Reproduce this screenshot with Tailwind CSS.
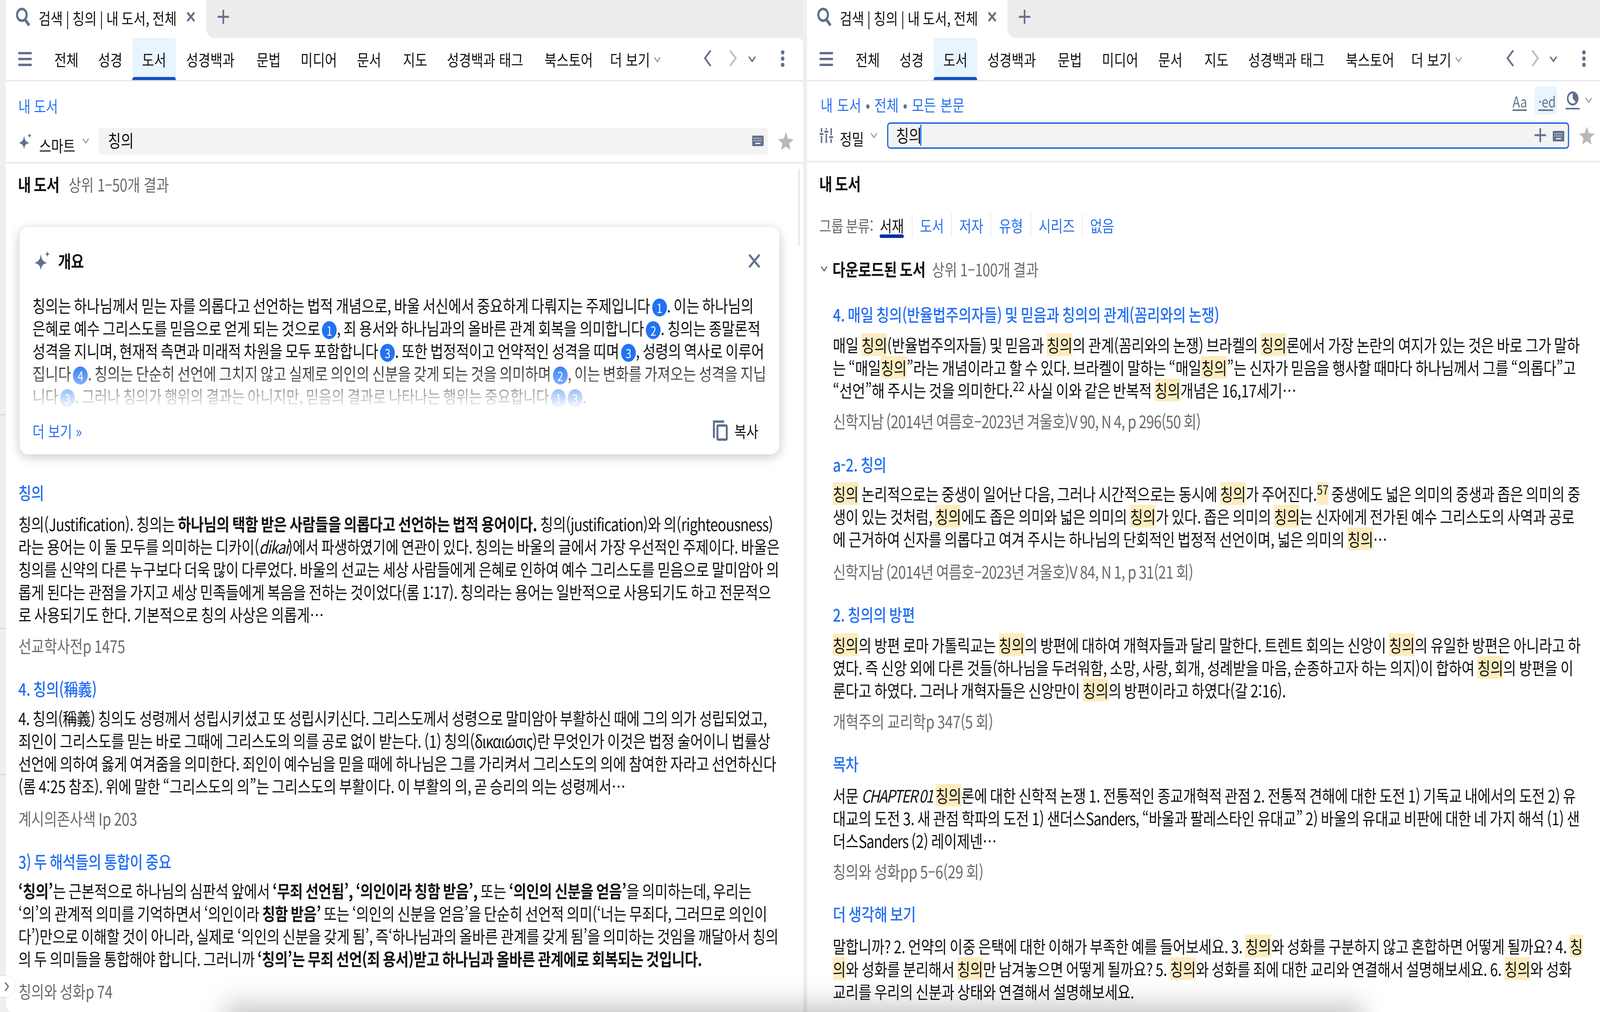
<!DOCTYPE html>
<html lang="ko">
  <head>
    <meta charset="UTF-8" />
    <meta name="viewport" content="width=device-width, initial-scale=1.0" />
    <script src="https://cdn.jsdelivr.net/npm/@tailwindcss/browser@4"></script>
    <title>검색 | 칭의</title>
  </head>
  <body class="w-screen h-screen overflow-hidden bg-[#efefef]">
  <div class="relative w-[4980px] h-[2590px] origin-top-left scale-x-[0.82249] overflow-hidden bg-[#efefef] text-[#111] font-['Noto_Sans_CJK_KR',sans-serif] text-[44px] leading-[58px] tracking-[-0.4px] [word-spacing:-3px] [&_mark]:bg-[#feecbf] [&_mark]:inline-block [&_mark]:text-inherit">
    <div class="flex h-full">
      <!-- left pane -->
      <div class="ml-[18px] w-[2482px] h-full relative overflow-hidden bg-white rounded-bl-[20px]">
        <div class="flex h-[97px] bg-white">
          <div class="w-[624px] flex items-center bg-white rounded-t-[20px] relative">
            <svg class="absolute left-[30px] top-[19px] w-[48px] h-[48px]" viewBox="0 0 48 48" fill="none" stroke="#62708c" stroke-width="6.500"><circle cx="20" cy="19" r="15"/><path d="M30 31l13 15" stroke-width="8"/></svg>
            <span class="absolute left-[102px] top-[16px] text-[41px] tracking-normal [word-spacing:-2px] whitespace-nowrap">검색 | 칭의 | 내 도서, 전체</span>
            <svg class="absolute left-[562px] top-[29px] w-[28px] h-[28px]" viewBox="0 0 28 28" fill="none" stroke="#62708c" stroke-width="5.500"><path d="M3 3l22 22M25 3L3 25"/></svg>
          </div>
          <div class="flex-1 bg-[#ececec] rounded-bl-[24px] relative">
            <svg class="absolute left-[35px] top-[25px] w-[36px] h-[36px]" viewBox="0 0 36 36" fill="none" stroke="#62708c" stroke-width="5"><path d="M18 0v36M0 18h36"/></svg>
          </div>
        </div>
        <div class="bg-[#ececec]">
          <div class="h-[111px] flex items-stretch bg-white rounded-tr-[16px] border-b-[3px] border-[#e6e6e6] text-[41px] tracking-normal [word-spacing:0] relative">
            <svg class="ml-[39px] mt-[36px] w-[42px] h-[36px]" viewBox="0 0 42 36" fill="#62708c"><rect width="42" height="6" rx="1"/><rect y="15" width="42" height="6" rx="1"/><rect y="30" width="42" height="6" rx="1"/></svg>
            <div class="ml-[40px] flex items-center">
              <span class="px-[30px]">전체</span>
              <span class="px-[31px]">성경</span>
              <span class="px-[30px] h-full flex items-center bg-[#e8f4fe] rounded-t-[8px] relative">도서<i class="absolute left-0 right-0 bottom-0 h-[8px] bg-[#1550c0] rounded-t-[6px]"></i></span>
              <span class="pl-[32px] pr-[37px]">성경백과</span>
              <span class="px-[31px]">문법</span>
              <span class="px-[31px]">미디어</span>
              <span class="pl-[31px] pr-[37px]">문서</span>
              <span class="pl-[31px] pr-[28px]">지도</span>
              <span class="px-[33px]">성경백과 태그</span>
              <span class="pl-[33px] pr-[30px]">북스토어</span>
              <span class="pl-[23px]">더 보기</span>
              <svg class="ml-[12px] mt-[4px] w-[22px] h-[14px]" viewBox="0 0 22 14" fill="none" stroke="#97a1b5" stroke-width="3.5"><path d="M2 1l9 11 9-11"/></svg>
            </div>
            <svg class="absolute left-[2172px] top-[31px] w-[26px] h-[42px]" viewBox="0 0 26 42" fill="none" stroke="#62708c" stroke-width="5"><path d="M22 1L4 21l18 20"/></svg>
            <svg class="absolute left-[2250px] top-[31px] w-[26px] h-[42px]" viewBox="0 0 26 42" fill="none" stroke="#b9bfcc" stroke-width="5"><path d="M4 1l18 20L4 41"/></svg>
            <svg class="absolute left-[2311px] top-[47px] w-[24px] h-[15px]" viewBox="0 0 24 15" fill="none" stroke="#62708c" stroke-width="4"><path d="M2 1l10 12L22 1"/></svg>
            <svg class="absolute left-[2410px] top-[31px] w-[16px] h-[44px]" viewBox="0 0 16 44" fill="#62708c"><circle cx="8" cy="6" r="5.5"/><circle cx="8" cy="22" r="5.5"/><circle cx="8" cy="38" r="5.5"/></svg>
          </div>
        </div>
        <div class="h-[210px] border-b-[3px] border-[#e6e6e6] pt-[33px]">
          <div class="pl-[39px] text-[41px] [word-spacing:0] text-[#2672f0]">내 도서</div>
          <div class="mt-[27px] flex items-center">
            <svg class="ml-[40px] w-[42px] h-[42px]" viewBox="0 0 42 42" fill="#62708c"><path d="M17 7c2 11 4 16 17 19-13 2-15 6-17 16-2-10-5-14-17-16 12-3 15-8 17-19z"/><path d="M34 0c.5 4 2 6 6 7-4 1-5.500 3-6 7-.5-4-2-6-6-7 4-1 5.500-3 6-7z"/></svg>
            <span class="ml-[22px] mt-[20px] text-[41px] leading-[50px]">스마트</span>
            <svg class="ml-[22px] w-[22px] h-[14px]" viewBox="0 0 22 14" fill="none" stroke="#97a1b5" stroke-width="3.5"><path d="M2 1l9 11 9-11"/></svg>
            <div class="ml-[29px] w-[2084px] h-[68px] rounded-[8px] bg-[#f3f3f3] relative pl-[29px] leading-[62px]">칭의
              <svg class="absolute left-[2034px] top-[20px] w-[36px] h-[27px]" viewBox="0 0 36 27"><rect width="36" height="27" rx="3" fill="#62708c"/><path d="M5 7h26M5 13h26" stroke="#fff" stroke-width="2.500" stroke-dasharray="2.500 2.500"/><path d="M10 20h16" stroke="#fff" stroke-width="3"/></svg>
            </div>
            <svg class="ml-[31px] w-[48px] h-[46px]" viewBox="0 0 48 46" fill="#b8b8b8"><path d="M24 0l6.500 16.500L48 18.500 34.500 29 38.500 46 24 37l-14.500 9L13.500 29 0 18.500l17.500-2z"/></svg>
          </div>
        </div>
        <div class="relative pt-[24px] whitespace-nowrap">
          <i class="absolute left-[2468px] top-[15px] w-[2px] h-[196px] bg-[#ccc]"></i>
          <div class="pl-[38px] flex gap-[28px]"><b class="font-bold">내 도서</b><span class="text-[43px] [word-spacing:0] text-[#6b6b6b]">상위 1–50개 결과</span></div>
          <!-- summary card -->
          <div class="mt-[81px] ml-[43px] w-[2365px] h-[582px] rounded-[26px] bg-white shadow-[0_6px_30px_rgba(0,0,0,0.22)] px-[40px] pt-[57px] relative">
            <div class="flex items-center">
              <svg class="ml-[6px] w-[50px] h-[50px]" viewBox="0 0 42 42" fill="#62708c"><path d="M17 7c2 11 4 16 17 19-13 2-15 6-17 16-2-10-5-14-17-16 12-3 15-8 17-19z"/><path d="M34 0c.5 4 2 6 6 7-4 1-5.500 3-6 7-.5-4-2-6-6-7 4-1 5.500-3 6-7z"/></svg>
              <b class="ml-[24px] font-bold">개요</b>
            </div>
            <svg class="absolute left-[2268px] top-[68px] w-[38px] h-[38px]" viewBox="0 0 38 38" fill="none" stroke="#62708c" stroke-width="6"><path d="M3 3l32 32M35 3L3 35"/></svg>
            <div class="relative mt-[56px] h-[296px] overflow-hidden">
              <p>칭의는 하나님께서 믿는 자를 의롭다고 선언하는 법적 개념으로, 바울 서신에서 중요하게 다뤄지는 주제입니다<span class="inline-flex w-[46px] h-[46px] ml-[6px] rounded-full bg-[#2272f5] text-white text-[32px] leading-[46px] justify-center align-[-1px]">1</span>. 이는 하나님의<br />
              은혜로 예수 그리스도를 믿음으로 얻게 되는 것으로<span class="inline-flex w-[46px] h-[46px] ml-[6px] rounded-full bg-[#2272f5] text-white text-[32px] leading-[46px] justify-center align-[-1px]">1</span>, 죄 용서와 하나님과의 올바른 관계 회복을 의미합니다<span class="inline-flex w-[46px] h-[46px] ml-[6px] rounded-full bg-[#2272f5] text-white text-[32px] leading-[46px] justify-center align-[-1px]">2</span>. 칭의는 종말론적<br />
              성격을 지니며, 현재적 측면과 미래적 차원을 모두 포함합니다<span class="inline-flex w-[46px] h-[46px] ml-[6px] rounded-full bg-[#2272f5] text-white text-[32px] leading-[46px] justify-center align-[-1px]">3</span>. 또한 법정적이고 언약적인 성격을 띠며<span class="inline-flex w-[46px] h-[46px] ml-[6px] rounded-full bg-[#2272f5] text-white text-[32px] leading-[46px] justify-center align-[-1px]">3</span>, 성령의 역사로 이루어<br />
              집니다<span class="inline-flex w-[46px] h-[46px] ml-[6px] rounded-full bg-[#2272f5] text-white text-[32px] leading-[46px] justify-center align-[-1px]">4</span>. 칭의는 단순히 선언에 그치지 않고 실제로 의인의 신분을 갖게 되는 것을 의미하며<span class="inline-flex w-[46px] h-[46px] ml-[6px] rounded-full bg-[#2272f5] text-white text-[32px] leading-[46px] justify-center align-[-1px]">2</span>, 이는 변화를 가져오는 성격을 지닙<br />
              니다<span class="inline-flex w-[46px] h-[46px] ml-[6px] rounded-full bg-[#2272f5] text-white text-[32px] leading-[46px] justify-center align-[-1px]">3</span>. 그러나 칭의가 행위의 결과는 아니지만, 믿음의 결과로 나타나는 행위는 중요합니다<span class="inline-flex w-[46px] h-[46px] ml-[6px] rounded-full bg-[#2272f5] text-white text-[32px] leading-[46px] justify-center align-[-1px]">1</span><span class="inline-flex w-[46px] h-[46px] ml-[6px] rounded-full bg-[#2272f5] text-white text-[32px] leading-[46px] justify-center align-[-1px]">3</span>.</p>
              <div class="absolute left-0 right-0 bottom-0 h-[125px] bg-linear-to-b from-white/0 via-white/45 to-white"></div>
            </div>
            <div class="mt-[25px] flex items-center justify-between">
              <span class="text-[41px] [word-spacing:0] text-[#2672f0]">더 보기 »</span>
              <span class="flex items-center gap-[20px] mr-[26px] text-[41px]">
                <svg class="w-[46px] h-[52px]" viewBox="0 0 46 52" fill="none" stroke="#62708c" stroke-width="6"><path d="M3 45V3h32" /><rect x="14" y="13" width="29" height="36" rx="2"/></svg>
                복사
              </span>
            </div>
          </div>
          <!-- results -->
          <div class="pl-[39px]">
            <div class="mt-[68px] text-[#2470f3] font-medium">칭의</div>
            <p class="mt-[22px]">칭의(<span class="tracking-[-1.2px]">Justification</span>). 칭의는 <b class="font-bold">하나님의 택함 받은 사람들을 의롭다고 선언하는 법적 용어이다.</b> 칭의(<span class="tracking-[-1.2px]">justification</span>)와 의(<span class="tracking-[-1.2px]">righteousness</span>)<br />
            라는 용어는 이 둘 모두를 의미하는 디카이(<em class="tracking-[-2px]">dikai</em>)에서 파생하였기에 연관이 있다. 칭의는 바울의 글에서 가장 우선적인 주제이다. 바울은<br />
            칭의를 신약의 다른 누구보다 더욱 많이 다루었다. 바울의 선교는 세상 사람들에게 은혜로 인하여 예수 그리스도를 믿음으로 말미암아 의<br />
            롭게 된다는 관점을 가지고 세상 민족들에게 복음을 전하는 것이었다(롬 1:17). 칭의라는 용어는 일반적으로 사용되기도 하고 전문적으<br />
            로 사용되기도 한다. 기본적으로 칭의 사상은 의롭게…</p>
            <div class="mt-[22px] text-[44px] text-[#6b6b6b]">선교학사전p 1475</div>

            <div class="mt-[52px] text-[#2470f3] font-medium">4. 칭의(稱義)</div>
            <p class="mt-[17px]"><span class="tracking-[-0.6px]">4. 칭의(稱義) 칭의도 성령께서 성립시키셨고 또 성립시키신다. 그리스도께서 성령으로 말미암아 부활하신 때에 그의 의가 성립되었고,</span><br />
            죄인이 그리스도를 믿는 바로 그때에 그리스도의 의를 공로 없이 받는다. (1) 칭의(<span class="tracking-[-2px]">δικαίωσις</span>)란 무엇인가 이것은 법정 술어이니 법률상<br />
            선언에 의하여 옳게 여겨줌을 의미한다. 죄인이 예수님을 믿을 때에 하나님은 그를 가리켜서 그리스도의 의에 참여한 자라고 선언하신다<br />
            (롬 4:25 참조). 위에 말한 “그리스도의 의”는 그리스도의 부활이다. 이 부활의 의, 곧 승리의 의는 성령께서…</p>
            <div class="mt-[25px] text-[44px] text-[#6b6b6b]">계시의존사색 Ip 203</div>

            <div class="mt-[52px] text-[#2470f3] font-medium">3) 두 해석들의 통합이 중요</div>
            <p class="mt-[17px] tracking-[-0.5px]"><b class="font-bold">‘칭의’</b>는 근본적으로 하나님의 심판석 앞에서 <b class="font-bold">‘무죄 선언됨’, ‘의인이라 칭함 받음’,</b> 또는 <b class="font-bold">‘의인의 신분을 얻음’</b>을 의미하는데, 우리는<br />
            ‘의’의 관계적 의미를 기억하면서 ‘의인이라 <b class="font-bold">칭함 받음’</b> 또는 ‘의인의 신분을 얻음’을 단순히 선언적 의미(‘너는 무죄다, 그러므로 의인이<br />
            다’)만으로 이해할 것이 아니라, 실제로 ‘의인의 신분을 갖게 됨’, 즉‘하나님과의 올바른 관계를 갖게 됨’을 의미하는 것임을 깨달아서 칭의<br />
            의 두 의미들을 통합해야 합니다. 그러니까 <b class="font-bold">‘칭의’는 무죄 선언(죄 용서)받고 하나님과 올바른 관계에로 회복되는 것입니다.</b></p>
            <div class="mt-[25px] text-[44px] text-[#6b6b6b]">칭의와 성화p 74</div>
          </div>
        </div>
      </div>
      <div class="w-[12px] h-full bg-[#efefef]"></div>
      <!-- right pane -->
      <div class="flex-1 h-full relative overflow-hidden bg-white">
        <div class="flex h-[97px] bg-white">
          <div class="w-[624px] flex items-center bg-white rounded-t-[20px] relative">
            <svg class="absolute left-[30px] top-[19px] w-[48px] h-[48px]" viewBox="0 0 48 48" fill="none" stroke="#62708c" stroke-width="6.500"><circle cx="20" cy="19" r="15"/><path d="M30 31l13 15" stroke-width="8"/></svg>
            <span class="absolute left-[102px] top-[16px] text-[41px] tracking-normal [word-spacing:-2px] whitespace-nowrap">검색 | 칭의 | 내 도서, 전체</span>
            <svg class="absolute left-[562px] top-[29px] w-[28px] h-[28px]" viewBox="0 0 28 28" fill="none" stroke="#62708c" stroke-width="5.500"><path d="M3 3l22 22M25 3L3 25"/></svg>
          </div>
          <div class="flex-1 bg-[#ececec] rounded-bl-[24px] relative">
            <svg class="absolute left-[35px] top-[25px] w-[36px] h-[36px]" viewBox="0 0 36 36" fill="none" stroke="#62708c" stroke-width="5"><path d="M18 0v36M0 18h36"/></svg>
          </div>
        </div>
        <div class="h-[111px] flex items-stretch bg-white border-b-[3px] border-[#e6e6e6] text-[41px] tracking-normal [word-spacing:0] relative">
          <svg class="ml-[39px] mt-[36px] w-[42px] h-[36px]" viewBox="0 0 42 36" fill="#62708c"><rect width="42" height="6" rx="1"/><rect y="15" width="42" height="6" rx="1"/><rect y="30" width="42" height="6" rx="1"/></svg>
          <div class="ml-[40px] flex items-center">
            <span class="px-[30px]">전체</span>
            <span class="px-[31px]">성경</span>
            <span class="px-[30px] h-full flex items-center bg-[#e8f4fe] rounded-t-[8px] relative">도서<i class="absolute left-0 right-0 bottom-0 h-[8px] bg-[#1550c0] rounded-t-[6px]"></i></span>
            <span class="pl-[32px] pr-[37px]">성경백과</span>
            <span class="px-[31px]">문법</span>
            <span class="px-[31px]">미디어</span>
            <span class="pl-[31px] pr-[37px]">문서</span>
            <span class="pl-[31px] pr-[28px]">지도</span>
            <span class="px-[33px]">성경백과 태그</span>
            <span class="pl-[33px] pr-[30px]">북스토어</span>
            <span class="pl-[23px]">더 보기</span>
            <svg class="ml-[12px] mt-[4px] w-[22px] h-[14px]" viewBox="0 0 22 14" fill="none" stroke="#97a1b5" stroke-width="3.5"><path d="M2 1l9 11 9-11"/></svg>
          </div>
          <svg class="absolute left-[2176px] top-[31px] w-[26px] h-[42px]" viewBox="0 0 26 42" fill="none" stroke="#62708c" stroke-width="5"><path d="M22 1L4 21l18 20"/></svg>
          <svg class="absolute left-[2253px] top-[31px] w-[26px] h-[42px]" viewBox="0 0 26 42" fill="none" stroke="#b9bfcc" stroke-width="5"><path d="M4 1l18 20L4 41"/></svg>
          <svg class="absolute left-[2311px] top-[47px] w-[24px] h-[15px]" viewBox="0 0 24 15" fill="none" stroke="#62708c" stroke-width="4"><path d="M2 1l10 12L22 1"/></svg>
          <svg class="absolute left-[2410px] top-[31px] w-[16px] h-[44px]" viewBox="0 0 16 44" fill="#62708c"><circle cx="8" cy="6" r="5.5"/><circle cx="8" cy="22" r="5.5"/><circle cx="8" cy="38" r="5.5"/></svg>
        </div>
        <div class="h-[207px] border-b-[3px] border-[#e6e6e6] pt-[30px] relative">
          <div class="pl-[42px] text-[41px] tracking-normal [word-spacing:2px] text-[#2672f0]">내 도서 <span class="text-[#62708c]">•</span> 전체 <span class="text-[#62708c]">•</span> 모든 본문</div>
          <div class="absolute left-[2196px] top-[30px] text-[38px] leading-[42px] text-[#62708c] w-[44px] text-center border-b-[4px] border-[#62708c]">Aa</div>
          <div class="absolute left-[2264px] top-[14px] w-[70px] h-[72px] rounded-[8px] bg-[#e8f4fe]"><div class="mt-[16px] mx-[12px] text-[38px] leading-[42px] text-[#62708c] text-center border-b-[4px] border-[#62708c]">·ed</div></div>
          <svg class="absolute left-[2361px] top-[26px] w-[44px] h-[46px]" viewBox="0 0 44 46" fill="#62708c"><circle cx="22" cy="18" r="15.500" fill="none" stroke="#62708c" stroke-width="5"/><path d="M22 3a15 15 0 0 1 11 26L22 18z"/><rect y="42" width="44" height="4"/></svg>
          <svg class="absolute left-[2422px] top-[42px] w-[22px] h-[14px]" viewBox="0 0 22 14" fill="none" stroke="#97a1b5" stroke-width="3.5"><path d="M2 1l9 11 9-11"/></svg>
          <div class="mt-[17px] flex items-center">
            <svg class="ml-[39px] w-[43px] h-[38px]" viewBox="0 0 43 38" fill="none" stroke="#62708c" stroke-width="4.500"><path d="M6 0v10M6 20v18M21 0v4M21 14v24M36 0v18M36 28v10"/><path d="M0 15h12M15 9h12M30 23h12" stroke-width="5"/></svg>
            <span class="ml-[20px] mt-[14px] text-[41px] leading-[50px]">정밀</span>
            <svg class="ml-[20px] w-[22px] h-[14px]" viewBox="0 0 22 14" fill="none" stroke="#97a1b5" stroke-width="3.5"><path d="M2 1l9 11 9-11"/></svg>
            <div class="ml-[30px] w-[2123px] h-[68px] rounded-[10px] border-[4px] border-[#2f6fe0] bg-[#f3f3f3] relative pl-[24px] leading-[56px]">칭의<i class="absolute left-[99px] top-[2px] w-[4px] h-[54px] bg-[#1a7bf0]"></i>
              <svg class="absolute left-[2011px] top-[11px] w-[36px] h-[36px]" viewBox="0 0 36 36" fill="none" stroke="#62708c" stroke-width="5"><path d="M18 0v36M0 18h36"/></svg>
              <svg class="absolute left-[2068px] top-[18px] w-[36px] h-[27px]" viewBox="0 0 36 27"><rect width="36" height="27" rx="3" fill="#62708c"/><path d="M5 7h26M5 13h26" stroke="#fff" stroke-width="2.500" stroke-dasharray="2.500 2.500"/><path d="M10 20h16" stroke="#fff" stroke-width="3"/></svg>
            </div>
            <svg class="ml-[31px] w-[48px] h-[46px]" viewBox="0 0 48 46" fill="#b8b8b8"><path d="M24 0l6.500 16.500L48 18.500 34.500 29 38.500 46 24 37l-14.500 9L13.500 29 0 18.500l17.500-2z"/></svg>
          </div>
        </div>
        <div class="pt-[25px] whitespace-nowrap">
          <div class="pl-[38px] font-bold">내 도서</div>
          <div class="mt-[48px] pl-[38px] h-[60px] flex items-center text-[41px] text-[#6b6b6b]">
            <span class="mr-[20px]">그룹 분류:</span>
            <span class="relative text-[#111]">서재<i class="absolute left-0 right-0 top-[53px] h-[9px] rounded-full bg-[#0a2f9e]"></i></span>
            <span class="ml-[25px] h-full border-l-[2px] border-[#e6e6e6] px-[23px] leading-[60px] text-[#2672f0]">도서</span>
            <span class="h-full border-l-[2px] border-[#e6e6e6] px-[23px] leading-[60px] text-[#2672f0]">저자</span>
            <span class="h-full border-l-[2px] border-[#e6e6e6] px-[24px] leading-[60px] text-[#2672f0]">유형</span>
            <span class="h-full border-l-[2px] border-[#e6e6e6] px-[23px] leading-[60px] text-[#2672f0]">시리즈</span>
            <span class="h-full border-l-[2px] border-[#e6e6e6] px-[23px] leading-[60px] text-[#2672f0]">없음</span>
          </div>
          <div class="mt-[53px] flex items-center">
            <svg class="ml-[42px] w-[22px] h-[14px]" viewBox="0 0 22 14" fill="none" stroke="#62708c" stroke-width="3.5"><path d="M2 1l9 11 9-11"/></svg>
            <b class="ml-[15px] font-bold">다운로드된 도서</b>
            <span class="ml-[20px] text-[43px] [word-spacing:-2px] text-[#6b6b6b]">상위 1–100개 결과</span>
          </div>
          <div class="pl-[80px]">
            <div class="mt-[58px] text-[#2470f3] font-medium">4. 매일 칭의(반율법주의자들) 및 믿음과 칭의의 관계(꼼리와의 논쟁)</div>
            <p class="mt-[20px]">매일 <mark>칭의</mark>(반율법주의자들) 및 믿음과 <mark>칭의</mark>의 관계(꼼리와의 논쟁) 브라켈의 <mark>칭의</mark>론에서 가장 논란의 여지가 있는 것은 바로 그가 말하<br />
            는 “매일<mark>칭의</mark>”라는 개념이라고 할 수 있다. 브라켈이 말하는 “매일<mark>칭의</mark>”는 신자가 믿음을 행사할 때마다 하나님께서 그를 “의롭다”고<br />
            “선언”해 주시는 것을 의미한다.<sup>22</sup> 사실 이와 같은 반복적 <mark>칭의</mark>개념은 16,17세기…</p>
            <div class="mt-[21px] text-[44px] tracking-[-1px] text-[#6b6b6b]">신학지남 (2014년 여름호–2023년 겨울호)V 90, N 4, p 296(50 회)</div>

            <div class="mt-[53px] text-[#2470f3] font-medium">a-2. 칭의</div>
            <p class="mt-[17px]"><mark>칭의</mark> 논리적으로는 중생이 일어난 다음, 그러나 시간적으로는 동시에 <mark>칭의</mark>가 주어진다.<mark><sup>57</sup></mark> 중생에도 넓은 의미의 중생과 좁은 의미의 중<br />
            생이 있는 것처럼, <mark>칭의</mark>에도 좁은 의미와 넓은 의미의 <mark>칭의</mark>가 있다. 좁은 의미의 <mark>칭의</mark>는 신자에게 전가된 예수 그리스도의 사역과 공로<br />
            에 근거하여 신자를 의롭다고 여겨 주시는 하나님의 단회적인 법정적 선언이며, 넓은 의미의 <mark>칭의</mark>…</p>
            <div class="mt-[25px] text-[44px] tracking-[-1px] text-[#6b6b6b]">신학지남 (2014년 여름호–2023년 겨울호)V 84, N 1, p 31(21 회)</div>

            <div class="mt-[52px] text-[#2470f3] font-medium">2. 칭의의 방편</div>
            <p class="mt-[20px]"><mark>칭의</mark>의 방편 로마 가톨릭교는 <mark>칭의</mark>의 방편에 대하여 개혁자들과 달리 말한다. 트렌트 회의는 신앙이 <mark>칭의</mark>의 유일한 방편은 아니라고 하<br />
            였다. 즉 신앙 외에 다른 것들(하나님을 두려워함, 소망, 사랑, 회개, 성례받을 마음, 순종하고자 하는 의지)이 합하여 <mark>칭의</mark>의 방편을 이<br />
            룬다고 하였다. 그러나 개혁자들은 신앙만이 <mark>칭의</mark>의 방편이라고 하였다(갈 2:16).</p>
            <div class="mt-[21px] text-[44px] text-[#6b6b6b]">개혁주의 교리학p 347(5 회)</div>

            <div class="mt-[51px] text-[#2470f3] font-medium">목차</div>
            <p class="mt-[23px]">서문 <em class="tracking-[-3px]">CHAPTER 01</em> <mark>칭의</mark>론에 대한 신학적 논쟁 1. 전통적인 종교개혁적 관점 2. 전통적 견해에 대한 도전 1) 기독교 내에서의 도전 2) 유<br />
            대교의 도전 3. 새 관점 학파의 도전 1) 샌더스<span class="tracking-[-1.7px]">Sanders</span>, “바울과 팔레스타인 유대교” 2) 바울의 유대교 비판에 대한 네 가지 해석 (1) 샌<br />
            더스<span class="tracking-[-1.7px]">Sanders</span> (2) 레이제넨…</p>
            <div class="mt-[20px] text-[44px] text-[#6b6b6b]">칭의와 성화pp 5–6(29 회)</div>

            <div class="mt-[51px] text-[#2470f3] font-medium">더 생각해 보기</div>
            <p class="mt-[25px]">말합니까? 2. 언약의 이중 은택에 대한 이해가 부족한 예를 들어보세요. 3. <mark>칭의</mark>와 성화를 구분하지 않고 혼합하면 어떻게 될까요? 4. <mark>칭</mark><br />
            <mark>의</mark>와 성화를 분리해서 <mark>칭의</mark>만 남겨놓으면 어떻게 될까요? 5. <mark>칭의</mark>와 성화를 죄에 대한 교리와 연결해서 설명해보세요. 6. <mark>칭의</mark>와 성화<br />
            교리를 우리의 신분과 상태와 연결해서 설명해보세요.</p>
          </div>
        </div>
      </div>
    </div>
    <!-- collapsed sidebar handle -->
    <div class="absolute left-0 top-[2498px] w-[45px] h-[53px] rounded-r-full bg-white shadow-[0_0_8px_rgba(0,0,0,0.12)] flex items-center pl-[14px]">
      <svg class="w-[14px] h-[24px]" viewBox="0 0 14 24" fill="none" stroke="#62708c" stroke-width="3.5"><path d="M2 1l10 11L2 23"/></svg>
    </div>
    <!-- thin marks in the window's left strip -->
    <i class="absolute left-0 top-[1060px] w-[18px] h-[3px] bg-[#d8d8d8]"></i>
    <i class="absolute left-0 top-[1607px] w-[18px] h-[3px] bg-[#d8d8d8]"></i>
    <i class="absolute left-0 top-[1981px] w-[18px] h-[3px] bg-[#d8d8d8]"></i>
    <!-- soft haze from the window below -->
    <div class="absolute left-[700px] right-[740px] top-[2575px] h-[90px] bg-black/25 blur-[36px]"></div>
  </div>
  </body>
</html>
